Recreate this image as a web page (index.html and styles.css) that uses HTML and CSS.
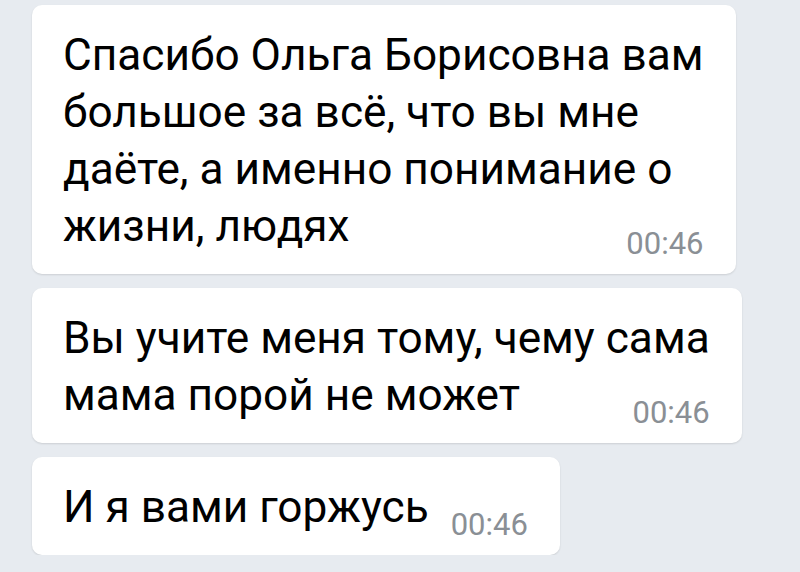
FILE: index.html
```html
<!DOCTYPE html>
<html>
  <head>
    <title>Сообщения</title>
    <link rel="stylesheet" href="styles.css">
  </head>
  <body>
    <div class="chat">
      <div class="bubble">
        Спасибо Ольга Борисовна вам<br>
        большое за всё, что вы мне<br>
        даёте, а именно понимание о<br>
        жизни, людях<span class="time">00:46</span>
      </div>

      <div class="bubble">
        Вы учите меня тому, чему сама<br>
        мама порой не может<span class="time">00:46</span>
      </div>

      <div class="bubble">
        И я вами горжусь<span class="time">00:46</span>
      </div>
    </div>
  </body>
</html>
```

FILE: styles.css
```css
* {
  box-sizing: border-box;
  margin: 0;
  padding: 0;
}

body {
  background-color: #e7ebf0;
  font-family: Roboto, "Noto Sans", Arial, sans-serif;
  color: #000;
}

.chat {
  display: flex;
  flex-direction: column;
  align-items: flex-start;
  gap: 14px;
  padding: 5px 0 0 32px;
}

/* Пузырь сообщения */
.bubble {
  display: flow-root;
  background-color: #ffffff;
  border-radius: 10px;
  box-shadow: 0 1px 2px rgba(0, 0, 0, 0.12);
  padding: 22px 32px 15px 31px;
  font-size: 44.2px;
  line-height: 57px;
}

/* Время сообщения */
.time {
  float: right;
  margin: 30px 0 0 22px;
  font-size: 31px;
  line-height: 31px;
  color: #8a8f95;
}
```
